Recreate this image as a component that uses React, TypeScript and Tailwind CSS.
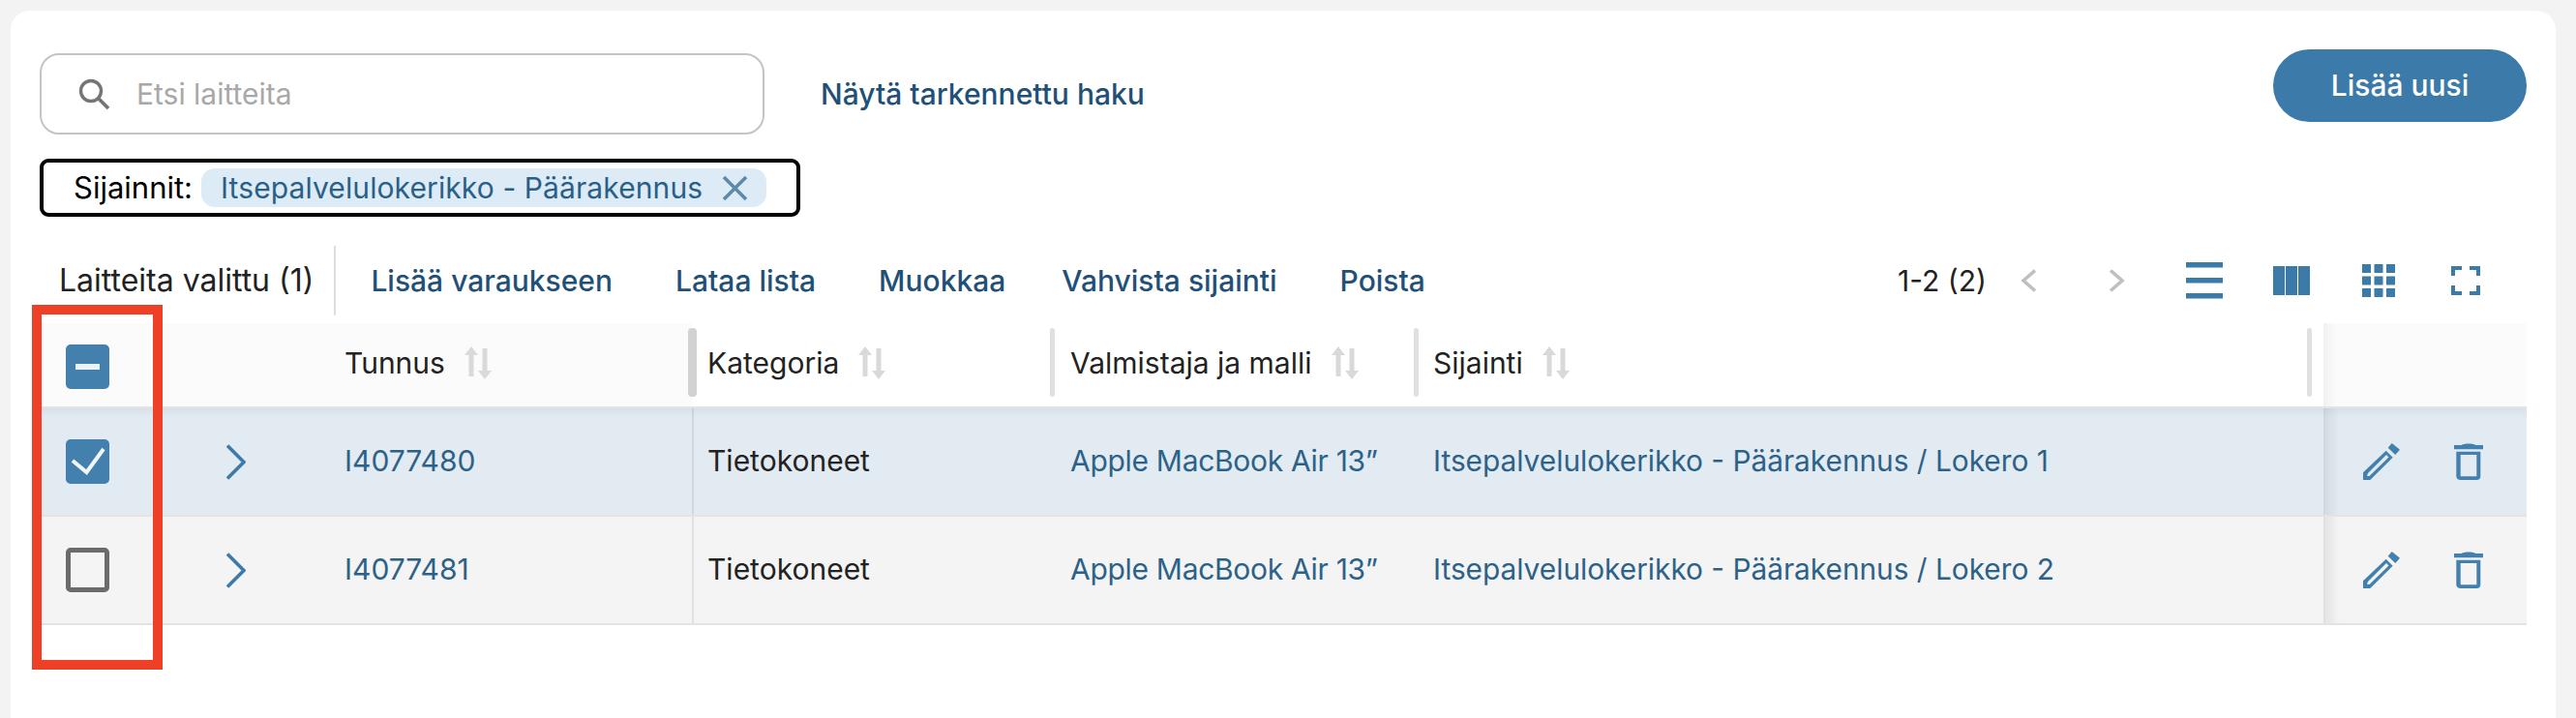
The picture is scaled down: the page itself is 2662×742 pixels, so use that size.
import { Fragment } from "react";

const GRID = "grid grid-cols-[161px_154px_359px_375px_376px_935px_210px]";

const rows = [
  { id: "I4077480", locker: "Lokero 1", selected: true },
  { id: "I4077481", locker: "Lokero 2", selected: false },
];

function SearchIcon() {
  return (
    <svg viewBox="0 0 33 33" className="h-[33px] w-[33px] fill-none stroke-[#757575]">
      <circle cx="13" cy="13" r="10.5" strokeWidth="3.4" />
      <path d="M20.5 20.5 31 31" strokeWidth="3.8" />
    </svg>
  );
}

function SortIcon() {
  return (
    <svg viewBox="0 0 28 34" className="h-[34px] w-[28px] fill-[#d9d9d9]">
      <path d="M7 0 14 9H9.5V31H4.5V9H0Z" />
      <path d="M21 34 14 25H18.5V2H23.5V25H28Z" />
    </svg>
  );
}

function Pencil() {
  return (
    <svg viewBox="0 0 38 38" className="h-[38px] w-[38px] fill-[#4380ae]">
      <path
        fillRule="evenodd"
        d="M0 38V30.300L23.700 7.700 30.700 14.700 7.300 38ZM4 34H6.500L26.500 14.500 24 12 5 31Z"
      />
      <path d="M25.700 4.700 29.700 0 38 6.700 33.300 12Z" />
    </svg>
  );
}

function Trash() {
  return (
    <svg viewBox="0 0 30 38" className="h-[38px] w-[30px] fill-[#4380ae]">
      <path d="M0 2H8C9 0 21 0 22 2H30V6.300H0Z" />
      <path
        fillRule="evenodd"
        d="M2.300 8.700H27.300V34C27.300 36.500 26 38 23.500 38H6.500C4 38 2.300 36.500 2.300 34ZM6.700 12V34.300H23.300V12Z"
      />
    </svg>
  );
}

function Chevron() {
  return (
    <svg viewBox="0 0 21 37" className="h-[37px] w-[21px] fill-none">
      <path d="M2 1.500 19 18.500 2 35.500" stroke="#3b7aa9" strokeWidth="3.600" />
    </svg>
  );
}

function ViewIcons() {
  return (
    <div className="flex items-center text-[#3b7aa9]">
      <svg viewBox="0 0 38 38" className="h-[38px] w-[38px] fill-current">
        <rect y="0" width="38" height="5.500" />
        <rect y="16" width="38" height="5.500" />
        <rect y="32" width="38" height="5.500" />
      </svg>
      <svg viewBox="0 0 38 30" className="ml-[52px] h-[30px] w-[38px] fill-current">
        <rect width="12" height="30" />
        <rect x="13" width="12" height="30" />
        <rect x="26" width="12" height="30" />
      </svg>
      <svg viewBox="0 0 34 34" className="ml-[54px] h-[34px] w-[34px] fill-current">
        {[0, 12.5, 25].map((y) =>
          [0, 12.5, 25].map((x) => <rect key={`${x}-${y}`} x={x} y={y} width="9" height="9" />)
        )}
      </svg>
      <svg viewBox="0 0 30 30" className="ml-[58px] h-[30px] w-[30px] fill-none stroke-current" strokeWidth="4">
        <path d="M2 10V2H11M19 2H28V10M28 20V28H19M11 28H2V20" />
      </svg>
    </div>
  );
}

function Checkbox({ state }: { state: "all" | "on" | "off" }) {
  if (state === "off") {
    return <div className="h-[46px] w-[45px] rounded-[5px] border-[5px] border-[#6b6b6b]" />;
  }
  return (
    <div className="flex h-[46px] w-[45px] items-center justify-center rounded-[5px] bg-[#4380ae]">
      {state === "all" ? (
        <div className="h-[6px] w-[25px] bg-white opacity-90" />
      ) : (
        <svg viewBox="0 0 45 46" className="h-[46px] w-[45px] fill-none">
          <path d="M7 22 21.500 34 39 10" stroke="#f2f6f9" strokeWidth="4" />
        </svg>
      )}
    </div>
  );
}

function HeaderCell({ label, handle, inset }: { label: string; handle: string; inset: string }) {
  return (
    <div className={`relative flex items-center gap-[20px] pb-[4px] ${inset}`}>
      <span>{label}</span>
      <SortIcon />
      <div className={`absolute top-[5px] h-[71px] w-[5px] rounded-[3px] bg-[#e0e0e0] ${handle}`} />
    </div>
  );
}

export default function App() {
  return (
    <div className="h-[742px] overflow-hidden bg-[#f3f3f3] pl-[11px] pr-[21px] pt-[11px] font-['Inter',sans-serif] text-[30px] text-[#222]">
      <div className="h-[731px] rounded-t-[20px] bg-white px-[30px] pt-[40px]">
        {/* Search and filters */}
        <div className="flex items-start justify-between">
          <div className="pt-[4px]">
            <div className="flex items-center">
              <div className="flex h-[84px] w-[749px] items-center rounded-[20px] border-2 border-[#c4c4c4] pl-[38px]">
                <SearchIcon />
                <span className="ml-[27px] text-[#a8a8a8]">Etsi laitteita</span>
              </div>
              <a className="ml-[58px] font-medium text-[#1f5078]">Näytä tarkennettu haku</a>
            </div>
            <div className="mt-[25px] flex h-[60px] w-[786px] items-center rounded-[9px] border-4 border-black pl-[31px] text-[31px] text-black">
              <span className="w-[132px] shrink-0">Sijainnit:</span>
              <div className="flex h-[40px] w-[584px] items-center rounded-[14px] bg-[#dcebf6] pl-[20px] text-[30px] text-[#2a5f88]">
                <span className="tracking-[0.1px]">Itsepalvelulokerikko - Päärakennus</span>
                <svg viewBox="0 0 27 27" className="ml-[20px] h-[27px] w-[27px] fill-none stroke-[#5d8aa9]" strokeWidth="3.600">
                  <path d="M2 2 25 25M25 2 2 25" />
                </svg>
              </div>
            </div>
          </div>
          <button className="h-[75px] w-[262px] rounded-[38px] bg-[#3b7aa9] font-medium text-white">Lisää uusi</button>
        </div>

        {/* Toolbar */}
        <div className="mt-[30px] flex h-[72px] items-center">
          <span className="ml-[20px] text-[32px]">Laitteita valittu (1)</span>
          <div className="ml-[21px] h-full w-[2px] bg-[#dddddd]" />
          <div className="ml-[36px] flex gap-[65px] font-medium text-[#1f5078]">
            <a>Lisää varaukseen</a>
            <a>Lataa lista</a>
            <a>Muokkaa</a>
            <a className="-ml-[7px]">Vahvista sijainti</a>
            <a>Poista</a>
          </div>
          <div className="ml-auto flex items-center pr-[48px]">
            <span>1-2 (2)</span>
            <svg viewBox="0 0 17 24" className="ml-[35px] h-[24px] w-[17px] fill-none stroke-[#bfbfbf]" strokeWidth="3.600">
              <path d="M15 1.500 3 12 15 22.500" />
            </svg>
            <svg viewBox="0 0 17 24" className="ml-[74px] h-[24px] w-[17px] fill-none stroke-[#bfbfbf]" strokeWidth="3.600">
              <path d="M2 1.500 14 12 2 22.500" />
            </svg>
            <div className="ml-[63px]">
              <ViewIcons />
            </div>
          </div>
        </div>

        {/* Table */}
        <div className="relative mt-[8px]">
          <div className={`${GRID} box-content h-[86px] border-b-2 border-[#e3e3e3]`}>
            <div className="col-span-2 flex items-center bg-[#fbfbfb] pl-[27px] pt-[4px]">
              <Checkbox state="all" />
            </div>
            <div className="relative flex items-center gap-[20px] bg-[#fbfbfb] pb-[4px]">
              <span>Tunnus</span>
              <SortIcon />
              <div className="absolute right-[-5px] top-[5px] h-[71px] w-[9px] rounded-[4px] bg-[#d2d2d2]" />
            </div>
            <HeaderCell label="Kategoria" handle="right-0" inset="pl-[16px]" />
            <HeaderCell label="Valmistaja ja malli" handle="right-0" inset="pl-[16px]" />
            <HeaderCell label="Sijainti" handle="right-[12px]" inset="pl-[15px]" />
            <div className="bg-gradient-to-r from-[#f1f1f1] via-[#fbfbfb] via-[6%] to-[#fbfbfb]" />
          </div>

          {rows.map((row) => (
            <Fragment key={row.id}>
              <div
                className={`${GRID} box-content h-[110px] border-b-2 border-[#e3e3e3] ${
                  row.selected ? "bg-[#e2eaf2] shadow-[inset_0_10px_8px_-6px_rgba(0,0,0,0.05)]" : "bg-[#f4f4f4]"
                }`}
              >
                <div className="flex items-center pl-[27px]">
                  <Checkbox state={row.selected ? "on" : "off"} />
                </div>
                <div className="flex items-center pl-[31px]">
                  <Chevron />
                </div>
                <div className="flex items-center pb-[2px] text-[#2d6288]">{row.id}</div>
                <div className="flex items-center border-l-2 border-[#00000014] pb-[2px] pl-[14px]">Tietokoneet</div>
                <div className="flex items-center pb-[2px] pl-[16px] tracking-[-0.3px] text-[#2d6288]">
                  Apple MacBook Air 13”
                </div>
                <div className="flex items-center pb-[2px] pl-[15px] text-[29.8px] text-[#2d6288]">
                  Itsepalvelulokerikko - Päärakennus / {row.locker}
                </div>
                <div className="flex items-center gap-[56px] border-l-2 border-[#00000014] bg-gradient-to-r from-[#00000010] to-transparent to-[7%] pl-[39px]">
                  <Pencil />
                  <Trash />
                </div>
              </div>
            </Fragment>
          ))}

          {/* Red highlight drawn over the selection column */}
          <div className="absolute left-[-8px] top-[-19px] h-[377px] w-[135px] border-[10px] border-[#ee4027]" />
        </div>
      </div>
    </div>
  );
}
